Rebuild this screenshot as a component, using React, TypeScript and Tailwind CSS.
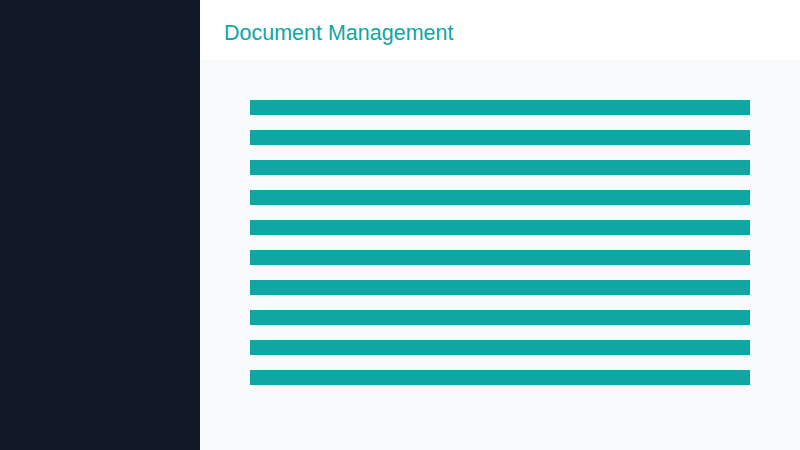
export default function App() {
  const rows = Array.from({ length: 10 });
  return (
    <div className="flex h-[450px] w-[800px] font-['Liberation_Sans',Arial,sans-serif]">
      <aside className="w-[200px] shrink-0 bg-[#111827]" />
      <div className="flex flex-1 flex-col">
        <header className="flex h-[60px] items-center bg-white px-6 pt-[7px]">
          <h1 className="text-[21.5px] font-normal leading-none text-[#10a6a3]">Document Management</h1>
        </header>
        <main className="flex flex-1 flex-col gap-[15px] bg-[#f8fafc] px-[50px] pt-[40px]">
          {rows.map((_, i) => (
            <div key={i} className="h-[15px] w-[500px] bg-[#10a6a3]" />
          ))}
        </main>
      </div>
    </div>
  );
}
